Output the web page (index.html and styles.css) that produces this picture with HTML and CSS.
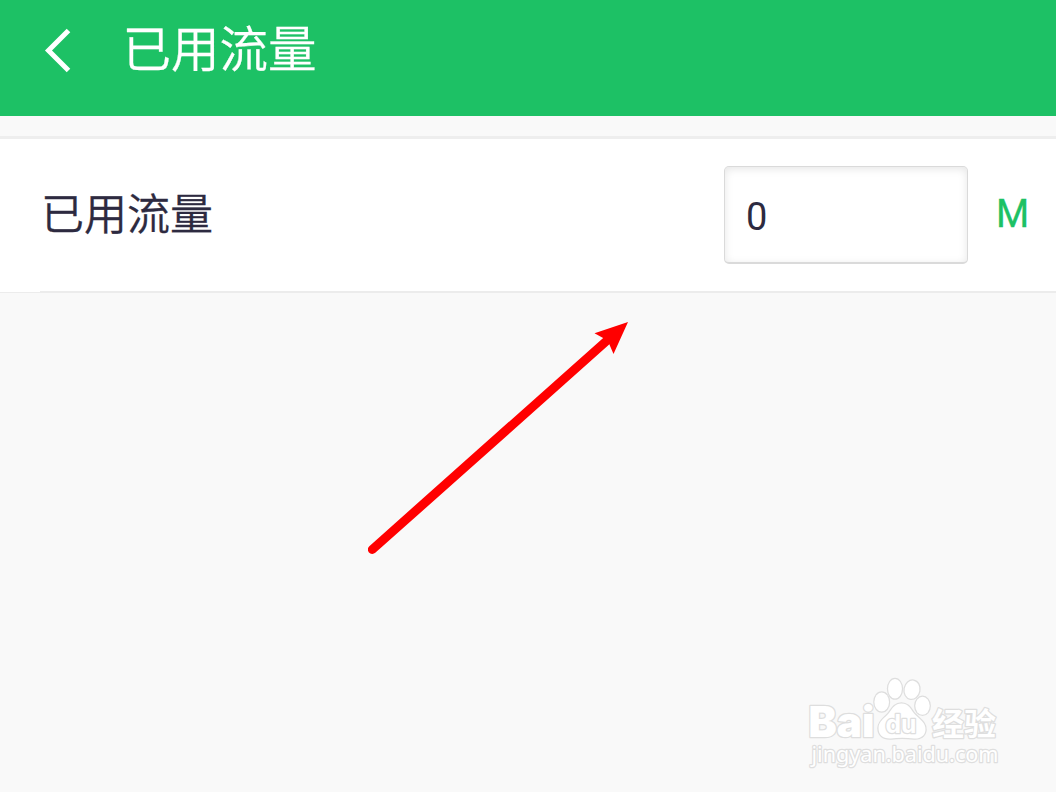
FILE: index.html
```html
<!DOCTYPE html>
<html lang="zh-CN">
<head>
<meta charset="utf-8">
<title>已用流量</title>
<link rel="stylesheet" href="styles.css">
</head>
<body>
<main class="screen">
  <header class="header">
    <svg class="back" width="28" height="46" viewBox="0 0 28 46"><path d="M24.500 3.5 4.500 23.5 24.500 43.5"/></svg>
    <h1 class="title">已用流量</h1>
  </header>
  <section class="row">
    <span class="label">已用流量</span>
    <div class="field">0</div>
    <span class="unit">M</span>
  </section>
  <svg class="arrow" width="262" height="236" viewBox="368 320 262 236">
    <path class="arrow-line" d="M372.3 549.5 607 340.500"/>
    <path class="arrow-head" d="M628 322 594.5 333.3 604 338.5 609 343.500 613.5 354Z"/>
  </svg>
  <svg class="watermark" width="210" height="105" viewBox="800 670 210 105">
    <g class="mark">
      <text class="brand" x="808.5" y="736.5" textLength="66" lengthAdjust="spacingAndGlyphs">Bai</text>
      <ellipse cx="881.7" cy="702" rx="7.3" ry="9.5"/>
      <ellipse cx="895" cy="688.8" rx="6.9" ry="9.8"/>
      <ellipse cx="912" cy="689.7" rx="7.4" ry="9.2" transform="rotate(10 912 689.7)"/>
      <ellipse cx="922.5" cy="705.8" rx="7.2" ry="9"/>
      <path d="M901.5 703.5C909 703.5 911 710 915 714.5C920 719.5 926 723 925.5 730C925 736 920 739 914 738.5C906 737.5 898 737.5 891 738.5C883 739 878.5 735 878.5 728C878.5 721 885 718 889 713C892.5 708 895 703.5 901.5 703.5Z"/>
      <text class="du" x="885.5" y="732.5" textLength="31" lengthAdjust="spacingAndGlyphs">du</text>
      <text class="cn" x="932" y="734.5" textLength="64" lengthAdjust="spacingAndGlyphs">经验</text>
      <text class="url" x="811.5" y="762" textLength="187" lengthAdjust="spacingAndGlyphs">jingyan.baidu.com</text>
    </g>
  </svg>
</main>
</body>
</html>
```
FILE: styles.css
```css
body {
  margin: 0;
  background: #f9f9f9;
  font-family: "Noto Sans CJK SC", sans-serif;
}
.screen {
  position: relative;
  height: 792px;
  overflow: hidden;
}
.header {
  display: flex;
  box-sizing: border-box;
  height: 116px;
  padding-left: 44px;
  background: #1dc165;
}
.back {
  margin-top: 27px;
}
.back path {
  fill: none;
  stroke: #fff;
  stroke-width: 5;
}
.title {
  margin: 0 0 0 50.5px;
  color: #fff;
  font-size: 48.5px;
  font-weight: 350;
  line-height: 92px;
  -webkit-text-stroke: 0.3px #fff;
}
.row {
  display: flex;
  align-items: flex-start;
  box-sizing: border-box;
  height: 157px;
  margin-top: 20px;
  padding: 27px 0 0 41px;
  border-top: 3px solid #eee;
  background:
    linear-gradient(#ececec, #ececec) right bottom / 1016px 2px no-repeat,
    linear-gradient(#ececec, #ececec) left bottom / 40px 1px no-repeat,
    #fff;
}
.label {
  flex: 1;
  color: #2d2a40;
  font-size: 43px;
  font-weight: 350;
  line-height: 91px;
  -webkit-text-stroke: 0.3px #2d2a40;
}
.field {
  box-sizing: border-box;
  width: 244px;
  height: 98px;
  padding-left: 21px;
  border: 1px solid #dadada;
  border-bottom-width: 2px;
  border-radius: 5px;
  box-shadow: inset 0 2px 9px #e6e6e6;
  color: #2d2a40;
  font: 38px/100px Roboto, sans-serif;
}
.unit {
  width: 60px;
  margin-left: 28px;
  color: #1dc165;
  font: 38px/97px Roboto, sans-serif;
  -webkit-text-stroke: 0.3px #1dc165;
}
.arrow {
  position: absolute;
  left: 368px;
  top: 320px;
}
.arrow-line {
  stroke: #f00;
  stroke-width: 9;
  stroke-linecap: round;
}
.arrow-head {
  fill: #f00;
}
.watermark {
  position: absolute;
  left: 800px;
  top: 670px;
}
.mark {
  fill: #fff;
  stroke: #dedede;
  stroke-width: 2.5;
  stroke-linejoin: round;
  paint-order: stroke;
}
.brand {
  font: 900 42px/1 Inter, sans-serif;
}
.du {
  font: bold 25px/1 Inter, sans-serif;
}
.cn {
  font: 700 31px/1 "Noto Sans CJK SC", sans-serif;
}
.url {
  font: 22px/1 "Noto Sans", sans-serif;
}
```
